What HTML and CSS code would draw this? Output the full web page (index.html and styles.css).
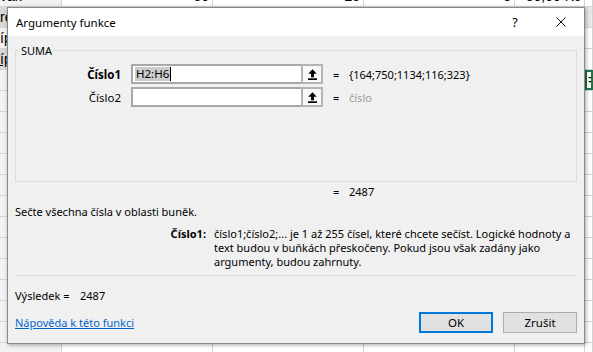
FILE: index.html
```html
<!DOCTYPE html>
<html lang="cs">
<head>
<meta charset="utf-8">
<title>Argumenty funkce</title>
<link rel="stylesheet" href="styles.css">
</head>
<body>
<div class="sheet">
  <div class="row row-first">
    <div class="cell ca">vak</div><div class="cell cb num">30</div><div class="cell cc num">25</div><div class="cell cd num">3</div><div class="cell ce num">30,00 Kč</div><div class="cell cf"></div>
  </div>
  <div class="row"><div class="cell ca sel">rek</div><div class="cell cb"></div><div class="cell cc"></div><div class="cell cd"></div><div class="cell ce"></div><div class="cell cf shade"></div></div>
  <div class="row"><div class="cell ca">ípr</div><div class="cell cb"></div><div class="cell cc"></div><div class="cell cd"></div><div class="cell ce"></div><div class="cell cf"></div></div>
  <div class="row"><div class="cell ca sel ul">ípr</div><div class="cell cb"></div><div class="cell cc"></div><div class="cell cd"></div><div class="cell ce"></div><div class="cell cf"></div></div>
  <div class="row"><div class="cell ca"></div><div class="cell cb"></div><div class="cell cc"></div><div class="cell cd"></div><div class="cell ce"></div><div class="cell cf active">=SUMA(H2:H6)</div></div>
  <div class="row"><div class="cell ca"></div><div class="cell cb"></div><div class="cell cc"></div><div class="cell cd"></div><div class="cell ce"></div><div class="cell cf"></div></div>
  <div class="row"><div class="cell ca"></div><div class="cell cb"></div><div class="cell cc"></div><div class="cell cd"></div><div class="cell ce"></div><div class="cell cf"></div></div>
  <div class="row"><div class="cell ca"></div><div class="cell cb"></div><div class="cell cc"></div><div class="cell cd"></div><div class="cell ce"></div><div class="cell cf"></div></div>
  <div class="row"><div class="cell ca"></div><div class="cell cb"></div><div class="cell cc"></div><div class="cell cd"></div><div class="cell ce"></div><div class="cell cf"></div></div>
  <div class="row"><div class="cell ca"></div><div class="cell cb"></div><div class="cell cc"></div><div class="cell cd"></div><div class="cell ce"></div><div class="cell cf"></div></div>
  <div class="row"><div class="cell ca"></div><div class="cell cb"></div><div class="cell cc"></div><div class="cell cd"></div><div class="cell ce"></div><div class="cell cf"></div></div>
  <div class="row"><div class="cell ca"></div><div class="cell cb"></div><div class="cell cc"></div><div class="cell cd"></div><div class="cell ce"></div><div class="cell cf"></div></div>
  <div class="row"><div class="cell ca"></div><div class="cell cb"></div><div class="cell cc"></div><div class="cell cd"></div><div class="cell ce"></div><div class="cell cf"></div></div>
  <div class="row"><div class="cell ca"></div><div class="cell cb"></div><div class="cell cc"></div><div class="cell cd"></div><div class="cell ce"></div><div class="cell cf"></div></div>
  <div class="row"><div class="cell ca"></div><div class="cell cb"></div><div class="cell cc"></div><div class="cell cd"></div><div class="cell ce"></div><div class="cell cf"></div></div>
  <div class="row"><div class="cell ca"></div><div class="cell cb"></div><div class="cell cc"></div><div class="cell cd"></div><div class="cell ce"></div><div class="cell cf"></div></div>
  <div class="row"><div class="cell ca"></div><div class="cell cb"></div><div class="cell cc"></div><div class="cell cd"></div><div class="cell ce"></div><div class="cell cf"></div></div>
  <div class="row"><div class="cell ca"></div><div class="cell cb"></div><div class="cell cc"></div><div class="cell cd"></div><div class="cell ce"></div><div class="cell cf"></div></div>
</div>

<div class="dialog">
  <div class="titlebar">
    <span class="title">Argumenty funkce</span>
    <span class="help">?</span>
    <span class="close">
      <svg width="10" height="10" viewBox="0 0 10 10"><path d="M0.5 0.5 L9.5 9.5 M9.5 0.5 L0.5 9.5" stroke="#111" stroke-width="1" fill="none"/></svg>
    </span>
  </div>
  <div class="body">
    <fieldset class="group">
      <legend>SUMA</legend>
      <div class="args">
        <div class="arg-label bold">Číslo1</div>
        <div class="field"><span class="sel-text">H2:H6</span><span class="caret"></span></div>
        <div class="ref-btn"><svg width="9" height="11" viewBox="0 0 9 11"><path d="M4.5 0.3 L8.7 4.8 H6 V8.2 H3 V4.8 H0.3 Z" fill="#000"/><rect x="0" y="9.3" width="9" height="1.7" fill="#000"/></svg></div>
        <div class="eq">=</div>
        <div class="val">{164;750;1134;116;323}</div>

        <div class="arg-label">Číslo2</div>
        <div class="field"></div>
        <div class="ref-btn"><svg width="9" height="11" viewBox="0 0 9 11"><path d="M4.5 0.3 L8.7 4.8 H6 V8.2 H3 V4.8 H0.3 Z" fill="#000"/><rect x="0" y="9.3" width="9" height="1.7" fill="#000"/></svg></div>
        <div class="eq">=</div>
        <div class="val muted">číslo</div>
      </div>
    </fieldset>
    <div class="total"><span class="eq">=</span><span>2487</span></div>
    <p class="summary">Sečte všechna čísla v oblasti buněk.</p>
    <div class="detail">
      <div class="detail-label bold">Číslo1:</div>
      <div class="detail-text">číslo1;číslo2;... je 1 až 255 čísel, které chcete sečíst. Logické hodnoty a text budou v buňkách přeskočeny. Pokud jsou však zadány jako argumenty, budou zahrnuty.</div>
    </div>
    <div class="sep"></div>
    <div class="result"><span class="result-label">Výsledek =</span><span>2487</span></div>
    <div class="footer">
      <a class="link" href="#">Nápověda k této funkci</a>
      <div class="buttons">
        <button class="btn primary">OK</button>
        <button class="btn">Zrušit</button>
      </div>
    </div>
  </div>
</div>
</body>
</html>
```
FILE: styles.css
```css
* { box-sizing: border-box; }
html, body { margin: 0; padding: 0; }
body {
  width: 593px;
  height: 352px;
  overflow: hidden;
  position: relative;
  background: #ffffff;
  font-family: "Noto Sans", "Open Sans", sans-serif;
  font-size: 11px;
  color: #000;
}

/* spreadsheet behind */
.sheet { margin-top: -14px; }
.row { display: flex; height: 21px; border-bottom: 1px solid #d4d4d4; }
.cell {
  height: 20px;
  border-right: 1px solid #d4d4d4;
  font-family: "Liberation Sans", sans-serif;
  font-size: 14px;
  line-height: 20px;
  white-space: nowrap;
  overflow: hidden;
  padding: 0 3px;
}
.ca { width: 62px; background: #f2f2f2; padding: 0; }
.cb, .cc, .cd { width: 151px; }
.ce { width: 70px; }
.cf { flex: 1; }
.num { text-align: right; }
.sel { background: #d9d9d9; }
.ul { text-decoration: underline; }
.shade { background: #e8e8e8; }
.active { border: 2px solid #217346; line-height: 16px; padding-left: 1px; }

/* dialog */
.dialog {
  position: absolute;
  left: 7px;
  top: 7px;
  width: 578px;
  height: 337px;
  background: #f0f0f0;
  border: 1px solid #8a8a8a;
  box-shadow: 1px 1px 4px rgba(0,0,0,0.35);
  display: flex;
  flex-direction: column;
}
.titlebar {
  height: 28px;
  background: #ffffff;
  display: flex;
  align-items: center;
  padding-left: 8px;
}
.title { flex: 1; font-size: 11.5px; }
.help { width: 46px; text-align: center; font-size: 12.5px; }
.close { width: 46px; display: flex; justify-content: center; }

.body { padding: 7px 7px 0 7px; flex: 1; display: flex; flex-direction: column; }

.group {
  margin: 0;
  padding: 6px 0 0 0;
  border: 1px solid #dcdcdc;
  height: 139px;
}
.group legend { margin-left: 4px; padding: 0 1px; line-height: 15px; }

.args {
  display: grid;
  grid-template-columns: 115px 170px 22px 26px 1fr;
  grid-template-rows: 20px 20px;
  row-gap: 3px;
  align-items: center;
}
.arg-label { width: 105px; text-align: right; font-size: 11.5px; }
.field {
  height: 20px;
  background: #fff;
  border: 2px solid #a8a8a8;
  border-right: none;
  display: flex;
  align-items: center;
  padding-left: 2px;
  font-size: 11.5px;
}
.sel-text { background: #cccccc; line-height: 14px; padding: 0 1px; }
.caret { display: inline-block; width: 1px; height: 14px; background: #000; }
.ref-btn {
  height: 20px;
  width: 22px;
  border: 2px solid #b4b4b4;
  background: #f7f7f7;
  display: flex;
  align-items: center;
  justify-content: center;
}
.eq { padding-left: 10px; }
.val { white-space: nowrap; }
.muted { color: #9a9a9a; }
.bold { font-weight: 700; }

.total { margin-top: 2px; padding-left: 318px; line-height: 15px; display: flex; }
.total .eq { width: 16px; padding-left: 0; }

.summary { margin: 5px 0 0 0; line-height: 15px; }

.detail { display: flex; margin-top: 8px; line-height: 14px; }
.detail-label { width: 199px; text-align: right; padding-right: 8px; flex: none; }
.detail-text { flex: 1; }

.sep { height: 1px; background: #dcdcdc; margin-top: 6px; }

.result { margin-top: 12px; line-height: 15px; display: flex; }
.result-label { width: 65px; }

.footer { margin-top: 9px; display: flex; align-items: center; }
.link { color: #0066cc; text-decoration: underline; flex: 1; }
.buttons { display: flex; gap: 10px; }
.btn {
  width: 74px;
  height: 21px;
  font-family: inherit;
  font-size: 11.5px;
  background: #e1e1e1;
  border: 1px solid #adadad;
  padding: 0;
  color: #000;
}
.btn.primary { border: 2px solid #0078d7; }
```
